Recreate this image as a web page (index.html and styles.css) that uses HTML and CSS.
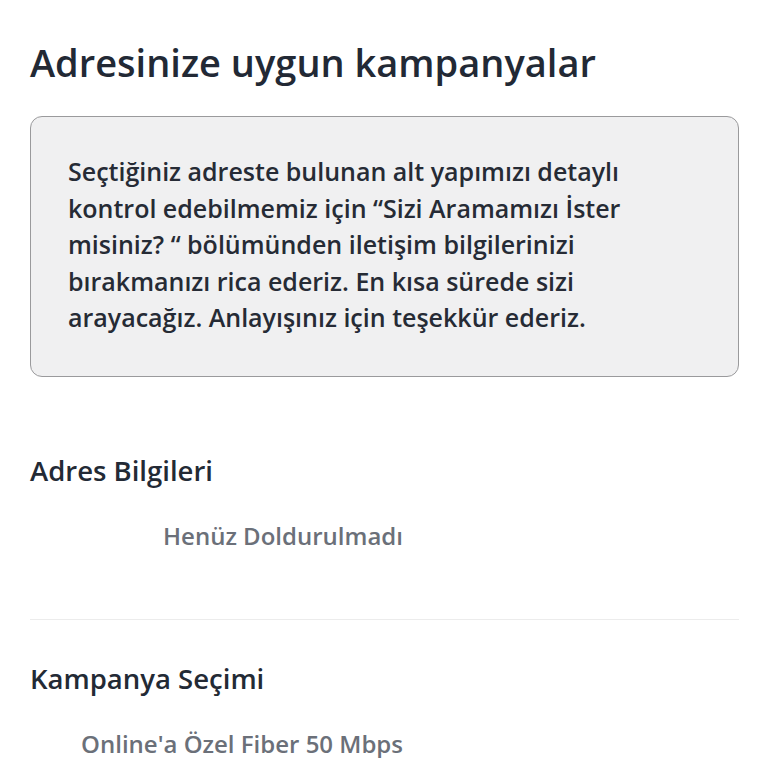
FILE: index.html
```html
<!DOCTYPE html>
<html lang="tr">
<head>
    <meta charset="UTF-8">
    <meta name="viewport" content="width=device-width, initial-scale=1.0">
    <title>Kampanyalar</title>
    <link rel="stylesheet" href="styles.css">
</head>
<body>
    <main class="page">
        <h1 class="page-title">Adresinize uygun kampanyalar</h1>

        <div class="notice">
            <p>Seçtiğiniz adreste bulunan alt yapımızı detaylı kontrol edebilmemiz için “Sizi Aramamızı İster misiniz? “ bölümünden iletişim bilgilerinizi bırakmanızı rica ederiz. En kısa sürede sizi arayacağız. Anlayışınız için teşekkür ederiz.</p>
        </div>

        <section class="summary summary-address">
            <h2>Adres Bilgileri</h2>
            <div class="summary-value">Henüz Doldurulmadı</div>
        </section>

        <section class="summary summary-campaign">
            <h2>Kampanya Seçimi</h2>
            <div class="summary-value">Online'a Özel Fiber 50 Mbps</div>
        </section>
    </main>
</body>
</html>
```

FILE: styles.css
```css
body {
    margin: 0;
    padding: 0;
    background-color: #fff;
    font-family: "Open Sans", Lato, sans-serif;
    color: #232a35;
}

.page {
    padding: 38px 29px 0 30px;
}

.page-title {
    margin: 0;
    font-size: 38px;
    line-height: 48px;
    font-weight: 600;
    color: #222935;
}

.notice {
    margin-top: 30px;
    background-color: #f0f0f1;
    border: 1px solid #9a9a9c;
    border-radius: 12px;
    padding: 36px 38px 40px 37px;
}

.notice p {
    margin: 0;
    max-width: 600px;
    font-size: 25px;
    line-height: 36.5px;
    font-weight: 600;
    color: #262b35;
}

.summary h2 {
    margin: 0;
    font-size: 27.5px;
    line-height: 32px;
    font-weight: 600;
    color: #232a35;
}

.summary-value {
    width: 373px;
    text-align: right;
    margin-top: 35px;
    font-size: 24px;
    line-height: 28px;
    font-weight: 600;
    color: #6b7079;
}

.summary-address {
    margin-top: 78px;
    padding-bottom: 69px;
    border-bottom: 1px solid #ececec;
}

.summary-campaign {
    padding-top: 43px;
}
```
